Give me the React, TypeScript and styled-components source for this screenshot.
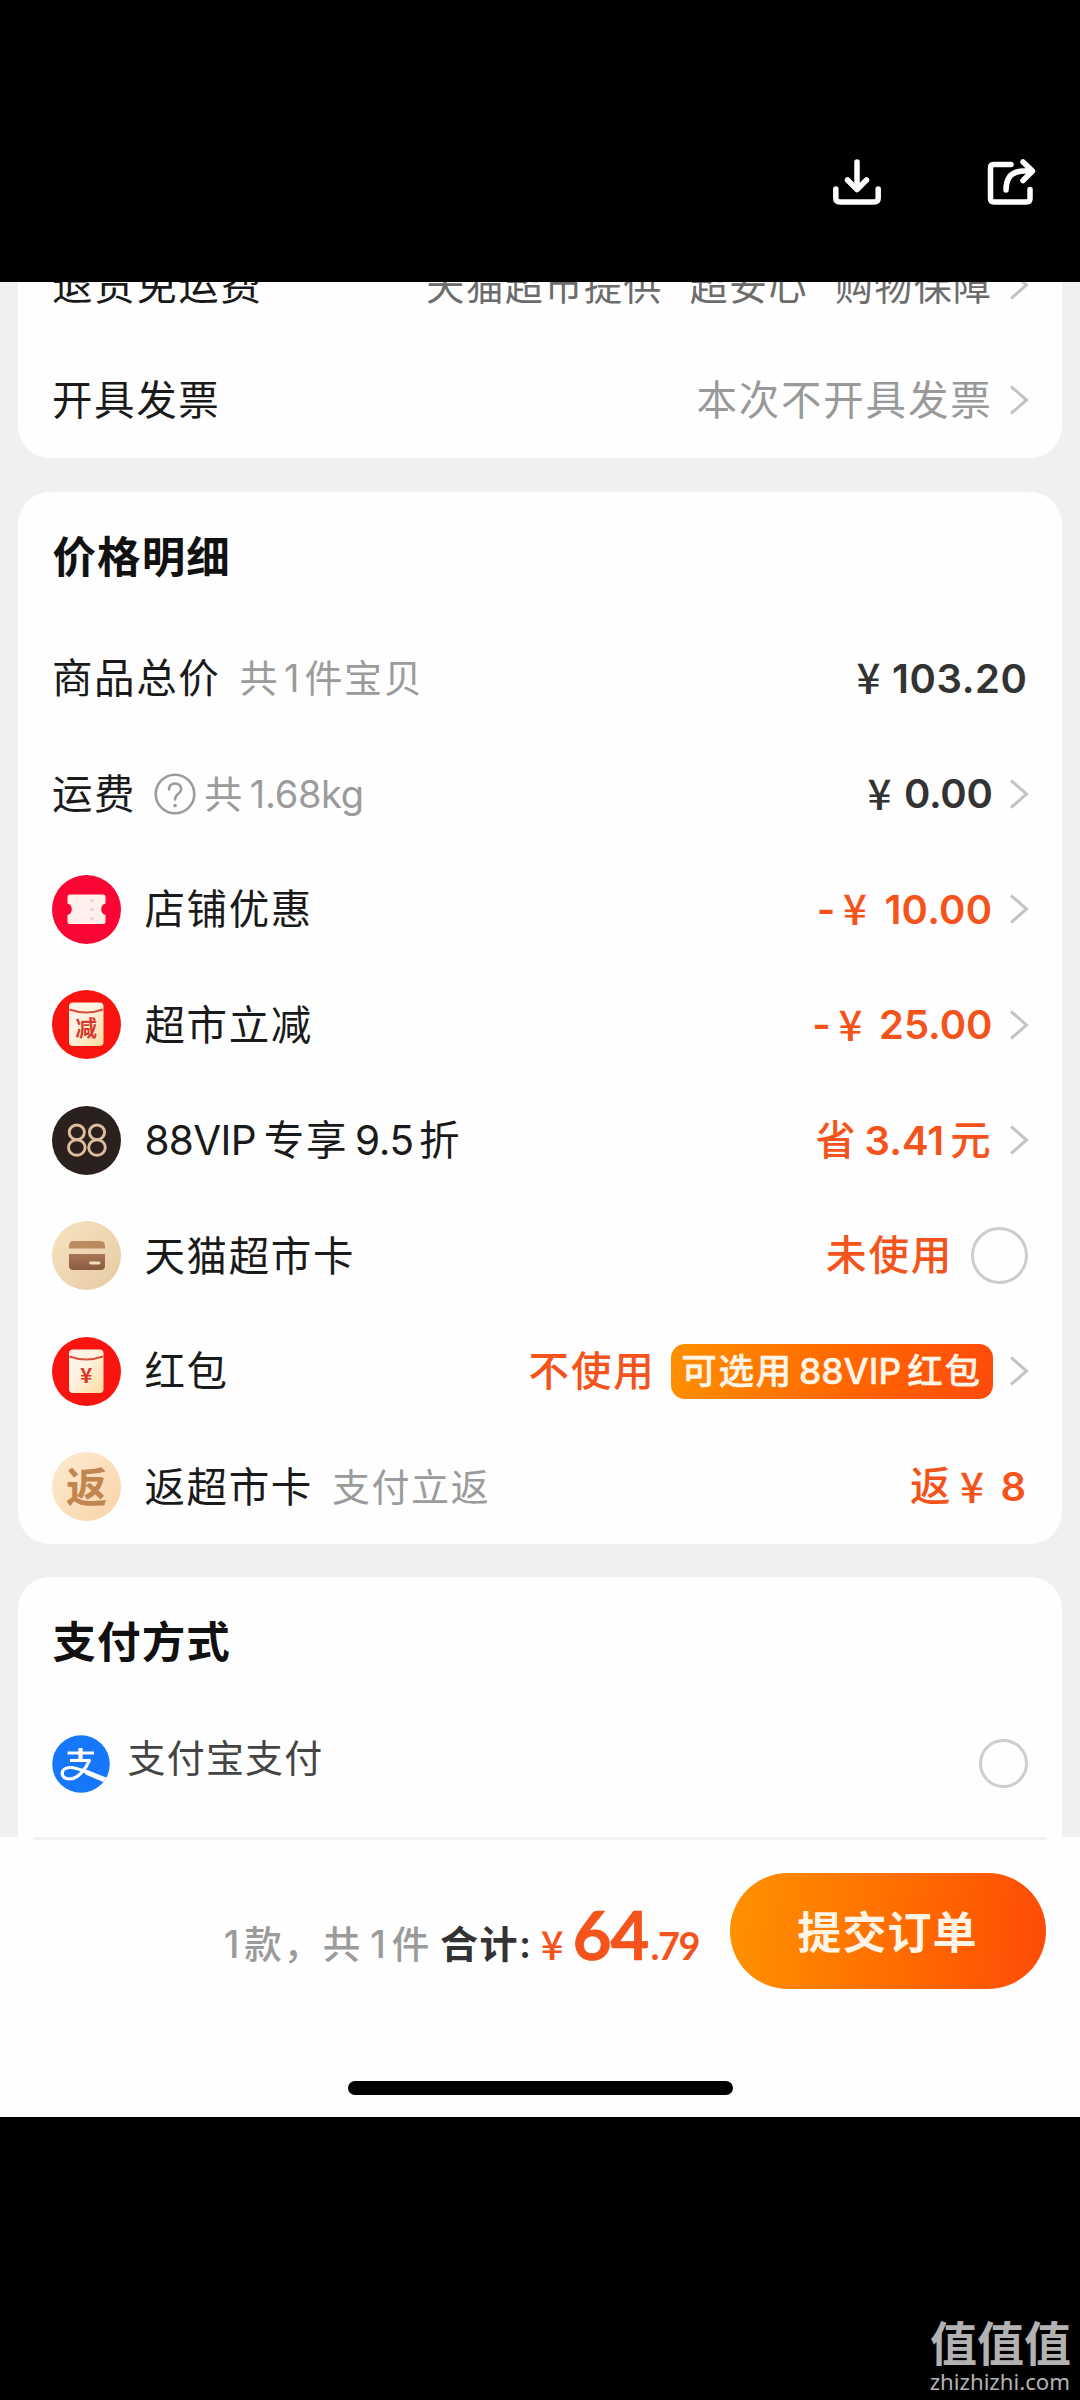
import React from 'react';
import styled, { createGlobalStyle } from 'styled-components';

const cjk = `Inter, "Noto Sans CJK SC", sans-serif`;
const ORANGE = '#f4531c';

const Global = createGlobalStyle`
  * { box-sizing: border-box; }
  body { margin: 0; background: #000; font-family: ${cjk}; line-height: 1; }
`;

const Screen = styled.div`
  width: 1080px;
  height: 2400px;
  display: flex;
  flex-direction: column;
  background: #000;
  overflow: hidden;
`;

const TopBar = styled.header`
  height: 282px;
  flex: none;
  display: flex;
  justify-content: flex-end;
  align-items: flex-start;
  gap: 102px;
  padding: 157px 43px 0 0;
`;

const Content = styled.main`
  height: 1555px;
  flex: none;
  display: flex;
  flex-direction: column;
  gap: 33.5px;
  padding: 0 18px 0 17.5px;
  background: #f0f0f0;
  overflow: hidden;
`;

const Card = styled.section<{ $h: number; $cut?: 'top' | 'bottom' }>`
  height: ${(p) => p.$h}px;
  flex: none;
  display: flex;
  flex-direction: column;
  justify-content: ${(p) => (p.$cut === 'top' ? 'flex-end' : 'flex-start')};
  overflow: hidden;
  background: #fefefe;
  border-radius: ${(p) =>
    p.$cut === 'top' ? '0 0 32px 32px' : p.$cut === 'bottom' ? '32px 32px 0 0' : '32px'};
`;

const Title = styled.h2`
  height: 129px;
  flex: none;
  margin: 0;
  padding: 3px 0 0 35px;
  display: flex;
  align-items: center;
  font-size: 43.5px;
  font-weight: 600;
  letter-spacing: 1.1px;
  color: #111;
`;

const Row = styled.div`
  height: 115.5px;
  flex: none;
  display: flex;
  align-items: center;
  justify-content: space-between;
  padding: 0 34px 0 34.5px;
`;

const Side = styled.div`
  display: flex;
  align-items: center;
  white-space: pre;
`;

const Label = styled.span`
  padding-top: 2px;
  font-size: 40.5px;
  letter-spacing: 1.6px;
  color: #1a1a1a;
`;

const PayLabel = styled.span`
  margin: -11px 0 0 17.5px;
  font-size: 38px;
  letter-spacing: 1.2px;
  color: #444;
`;

const Badge = styled.span`
  width: 69px;
  height: 69px;
  margin: 0 24px 0 -0.5px;
  display: flex;
  svg { display: block; }
`;

const Sub = styled.span<{ $ml: number }>`
  margin-left: ${(p) => p.$ml}px;
  font-size: 38px;
  letter-spacing: 1.6px;
  color: #9b9b9b;
`;

const Value = styled.span<{ $tone?: string; $size?: number; $ls?: number; $ml?: number }>`
  padding-top: 2px;
  margin-left: ${(p) => p.$ml ?? 0}px;
  font-size: ${(p) => p.$size ?? 40.5}px;
  letter-spacing: ${(p) => p.$ls ?? 1.8}px;
  color: ${(p) => p.$tone ?? '#999'};
`;

const Amount = styled.span<{ $tone?: string; $end?: number }>`
  padding-top: 1px;
  display: flex;
  align-items: center;
  margin-right: ${(p) => p.$end ?? 0}px;
  font-size: 40px;
  font-weight: 600;
  color: ${(p) => p.$tone ?? '#333'};
`;

const Strong = styled.span`
  font-size: 40.5px;
  font-weight: 500;
  letter-spacing: 1.8px;
`;

const Yen = styled.span<{ $gap: number; $ml?: number }>`
  width: 23px;
  height: 40px;
  margin: -5px ${(p) => p.$gap}px 0 ${(p) => p.$ml ?? 0}px;
  font-family: "Noto Sans CJK SC", sans-serif;
  font-size: 42px;
  line-height: 40px;
  font-weight: 500;
  display: flex;
  justify-content: center;
`;

const Dash = styled.span`
  margin-right: 8px;
`;

const Digits = styled.span<{ $ls?: number; $m?: string }>`
  font-weight: 600;
  letter-spacing: ${(p) => p.$ls ?? 0}px;
  margin: ${(p) => p.$m ?? '0'};
`;

const Latin = styled.span<{ $m: string; $ls?: number }>`
  margin: ${(p) => p.$m};
  letter-spacing: ${(p) => p.$ls ?? 0}px;
`;

const Arrow = styled.svg`
  width: 20px;
  height: 32px;
  margin: 0 -1px 0 16.5px;
  display: block;
`;

const Radio = styled.span<{ $d: number }>`
  width: ${(p) => p.$d}px;
  height: ${(p) => p.$d}px;
  border: 3px solid #cdcdcd;
  border-radius: 50%;
`;

const Coupon = styled.span`
  width: 322px;
  height: 55px;
  margin: 0 0 0 15px;
  display: flex;
  align-items: center;
  justify-content: center;
  border-radius: 14px;
  background: linear-gradient(100deg, #ff9000, #ff6a00 50%, #ff4a0c);
  color: #fff6ea;
  font-size: 35.5px;
  font-weight: 500;
  letter-spacing: 1.7px;
  -webkit-text-stroke: 0.4px #fff6ea;
`;

const Divider = styled.div`
  width: 1014px;
  height: 3px;
  margin-left: 33px;
  background: #f3f3f3;
`;

const Checkout = styled.footer`
  height: 280px;
  flex: none;
  display: flex;
  flex-direction: column;
  background: #fefefe;
`;

const CheckoutRow = styled.div`
  height: 116px;
  margin-top: 33px;
  display: flex;
  justify-content: flex-end;
  padding-right: 34px;
`;

const Summary = styled.div`
  display: flex;
  align-items: baseline;
  height: 116px;
  padding-top: 28px;
  margin-right: 31px;
  white-space: pre;
`;

const Count = styled.span`
  font-size: 37.5px;
  font-weight: 500;
  letter-spacing: 1.8px;
  color: #9b9b9b;
  transform: translateY(-2px);
`;

const Total = styled.span`
  margin-left: 9px;
  font-size: 38px;
  font-weight: 600;
  letter-spacing: 1.5px;
  color: #333;
  transform: translateY(-2px);
`;

const Price = styled.span<{ $size: number; $ls: number; $ml: number }>`
  margin-left: ${(p) => p.$ml}px;
  font-family: Lato, sans-serif;
  font-weight: 700;
  font-size: ${(p) => p.$size}px;
  letter-spacing: ${(p) => p.$ls}px;
  color: ${ORANGE};
  -webkit-text-stroke: ${(p) => (p.$size > 50 ? 0.7 : 0)}px ${ORANGE};
`;

const PriceYen = styled.span`
  margin-left: 8px;
  width: 24px;
  font-family: "Noto Sans CJK SC", sans-serif;
  font-size: 40px;
  font-weight: 500;
  color: ${ORANGE};
`;

const Submit = styled.button`
  width: 316px;
  height: 116px;
  border: 0;
  padding: 0 1px 2px 0;
  border-radius: 58px;
  background: linear-gradient(95deg, #ff9200, #ff5f00 72%, #ff4a0a);
  color: #fff4e6;
  font: 600 44px ${cjk};
  letter-spacing: 1.1px;
`;

const HomeBar = styled.div`
  width: 385px;
  height: 14px;
  margin: 92px 0 0 348px;
  border-radius: 7px;
  background: #000;
`;

const Watermark = styled.div`
  margin-top: auto;
  align-self: flex-end;
  display: flex;
  flex-direction: column;
  align-items: flex-end;
  padding: 0 10px 7px 0;
  color: #b2b2b2;
`;

const MarkName = styled.span`
  margin: 0 -1px 7px 0;
  font: 700 47px/47px "Noto Sans CJK SC", sans-serif;
`;

const MarkHost = styled.span`
  font: 400 22.2px/22px "Noto Sans", sans-serif;
`;

const HelpMark = styled.svg`
  width: 42px;
  height: 42px;
  margin-left: 18px;
`;

const Chevron = () => (
  <Arrow viewBox="0 0 20 32">
    <path d="M2 2.5 17.5 16 2 29.5" fill="none" stroke="#c4c4c4" strokeWidth="3" />
  </Arrow>
);

const Download = () => (
  <svg width="52" height="50" viewBox="0 0 52 50" fill="none" stroke="#fff" strokeWidth="5.500" strokeLinecap="round" strokeLinejoin="round">
    <path d="M26 5V32M16.500 23 26 32.500 35.500 23M4.800 32V41Q4.800 45 9 45H43Q47.200 45 47.200 41V32" />
  </svg>
);

const Share = () => (
  <svg width="52" height="50" viewBox="0 0 52 50" fill="none" stroke="#fff" strokeWidth="5.500" strokeLinecap="round" strokeLinejoin="round">
    <path d="M26 7.500H8.500Q5.500 7.500 5.500 11V41.500Q5.500 45 9 45H41.500Q45 45 45 41.500V32.500M38 5 47.500 14 38 23.500M46.500 14H39Q21 14 21 33" />
  </svg>
);

const Help = () => (
  <HelpMark viewBox="0 0 42 42" fill="none" stroke="#9b9b9b" strokeWidth="2.600" strokeLinecap="round">
    <circle cx="21" cy="21" r="19.300" />
    <path d="M15 16.500C15 12.800 17.500 10.500 21 10.500S27.200 12.800 27.200 16.200C27.200 20.500 21 20.500 21 26.500" />
    <circle cx="21" cy="32.500" r="1.100" fill="#9b9b9b" strokeWidth="1.500" />
  </HelpMark>
);

const TicketIcon = () => (
  <svg width="69" height="69" viewBox="0 0 69 69">
    <circle cx="34.500" cy="34.500" r="34.500" fill="#fb0535" />
    <path d="M18 19.500H51Q53.500 19.500 53.500 22V28.500A6 6 0 0 0 53.500 40V46.500Q53.500 49 51 49H18Q15.500 49 15.500 46.500V40A6 6 0 0 0 15.500 28.500V22Q15.500 19.500 18 19.500Z" fill="#fff0ec" />
    <path d="M40 24V45" stroke="#f9c9cb" strokeWidth="3" strokeDasharray="3 6" />
  </svg>
);

const EnvelopeIcon = ({ mark, size }: { mark: string; size: number }) => (
  <svg width="69" height="69" viewBox="0 0 69 69">
    <defs>
      <linearGradient id="paper" x1="0" y1="0" x2="1" y2="1">
        <stop offset="0.400" stopColor="#fff3e4" />
        <stop offset="1" stopColor="#fbdc9c" />
      </linearGradient>
    </defs>
    <circle cx="34.500" cy="34.500" r="34.500" fill="#f9140f" />
    <rect x="17" y="12.500" width="34.500" height="43.500" rx="4" fill="url(#paper)" />
    <path d="M17.500 19.500Q34 25.500 51 19.500" fill="none" stroke="#d8503c" strokeWidth="2" />
    <text x="34.300" y="45.500" textAnchor="middle" fontSize={size} fontWeight="700" fontFamily='"Noto Sans CJK SC", sans-serif' fill="#d8372a">
      {mark}
    </text>
  </svg>
);

const VipIcon = () => (
  <svg width="69" height="69" viewBox="0 0 69 69">
    <circle cx="34.500" cy="34.500" r="34.500" fill="#2a201d" />
    <g fill="none" stroke="#dcbd9c" strokeWidth="2.900">
      <ellipse cx="24.800" cy="26.300" rx="7.600" ry="7.300" />
      <ellipse cx="24.800" cy="41.500" rx="8.300" ry="7.800" />
      <ellipse cx="45" cy="26.300" rx="7.600" ry="7.300" />
      <ellipse cx="45" cy="41.500" rx="8.300" ry="7.800" />
    </g>
  </svg>
);

const CardIcon = () => (
  <svg width="69" height="69" viewBox="0 0 69 69">
    <defs>
      <linearGradient id="sand" x1="0" y1="0" x2="1" y2="1">
        <stop offset="0" stopColor="#f8e2c0" />
        <stop offset="1" stopColor="#e6cba2" />
      </linearGradient>
      <linearGradient id="leather" x1="0" y1="0" x2="0" y2="1">
        <stop offset="0" stopColor="#a87852" />
        <stop offset="1" stopColor="#8a5a42" />
      </linearGradient>
    </defs>
    <circle cx="34.500" cy="34.500" r="34.500" fill="url(#sand)" />
    <path d="M17 27.500V25Q17 20 22 20H48Q53 20 53 25V27.500Z" fill="#b98c60" />
    <path d="M17 33H53V44.500Q53 49 48.500 49H21.500Q17 49 17 44.500Z" fill="url(#leather)" />
    <path d="M38.500 42H47" stroke="#f2dcc0" strokeWidth="2.800" strokeLinecap="round" />
  </svg>
);

const ReturnIcon = () => (
  <svg width="69" height="69" viewBox="0 0 69 69">
    <defs>
      <linearGradient id="cream" x1="0" y1="0" x2="1" y2="1">
        <stop offset="0" stopColor="#fdebd2" />
        <stop offset="1" stopColor="#f8d3a6" />
      </linearGradient>
    </defs>
    <circle cx="34.500" cy="34.500" r="34.500" fill="url(#cream)" />
    <text x="34.500" y="49.500" textAnchor="middle" fontSize="41" fontWeight="700" fontFamily='"Noto Sans CJK SC", sans-serif' fill="#c1854f">
      返
    </text>
  </svg>
);

const AlipayIcon = () => (
  <svg width="58" height="58" viewBox="0 0 58 58">
    <defs>
      <clipPath id="disc"><circle cx="29" cy="29" r="28.800" /></clipPath>
    </defs>
    <circle cx="29" cy="29" r="28.800" fill="#1677fb" />
    <g clipPath="url(#disc)" fill="none" stroke="#fff">
      <path d="M28.500 13V25" strokeWidth="4.200" />
      <path d="M15.500 18H42M18 25.500H38.500" strokeWidth="2.800" />
      <path d="M37.500 25C34 34 26 44 17.500 44 7.500 44 8 33 17.500 32.500 26 32 38 39.500 60 46" strokeWidth="3.200" />
      <path d="M34 37 60 48" strokeWidth="5" />
    </g>
  </svg>
);

export default function App() {
  return (
    <Screen>
      <Global />
      <TopBar>
        <Download />
        <Share />
      </TopBar>

      <Content>
        <Card $h={176} $cut="top">
          <Row>
            <Side><Label>退货免运费</Label></Side>
            <Side>
              <Value $tone="#6c6c6c" $size={38} $ls={1.4}>天猫超市提供</Value>
              <Value $tone="#6c6c6c" $size={38} $ls={1.4} $ml={27}>超安心</Value>
              <Value $tone="#6c6c6c" $size={38} $ls={1.4} $ml={27}>购物保障</Value>
              <Chevron />
            </Side>
          </Row>
          <Row>
            <Side><Label>开具发票</Label></Side>
            <Side><Value>本次不开具发票</Value><Chevron /></Side>
          </Row>
        </Card>

        <Card $h={1052}>
          <Title>价格明细</Title>
          <Row>
            <Side>
              <Label>商品总价</Label>
              <Sub $ml={19}>共<Latin $m="0 5px">1</Latin>件宝贝</Sub>
            </Side>
            <Amount $end={0.5}><Yen $gap={12}>¥</Yen><Digits $ls={0.6}>103.20</Digits></Amount>
          </Row>
          <Row>
            <Side>
              <Label>运费</Label>
              <Help />
              <Sub $ml={8}>共<Latin $m="0 0 0 6px" $ls={-0.3}>1.68kg</Latin></Sub>
            </Side>
            <Side><Amount><Yen $gap={13}>¥</Yen><Digits $ls={-0.3}>0.00</Digits></Amount><Chevron /></Side>
          </Row>
          <Row>
            <Side><Badge><TicketIcon /></Badge><Label>店铺优惠</Label></Side>
            <Side>
              <Amount $tone={ORANGE}><Dash>-</Dash><Yen $gap={18}>¥</Yen><Digits $ls={0.3}>10.00</Digits></Amount>
              <Chevron />
            </Side>
          </Row>
          <Row>
            <Side><Badge><EnvelopeIcon mark="减" size={21.5} /></Badge><Label>超市立减</Label></Side>
            <Side>
              <Amount $tone={ORANGE}><Dash>-</Dash><Yen $gap={17}>¥</Yen><Digits>25.00</Digits></Amount>
              <Chevron />
            </Side>
          </Row>
          <Row>
            <Side>
              <Badge><VipIcon /></Badge>
              <Label><Latin $m="0 8px 0 0" $ls={-0.7}>88VIP</Latin>专享<Latin $m="0 5px 0 7px" $ls={-0.3}>9.5</Latin>折</Label>
            </Side>
            <Side>
              <Amount $tone={ORANGE}><Strong>省</Strong><Digits $m="0 6px 0 7px">3.41</Digits><Strong>元</Strong></Amount>
              <Chevron />
            </Side>
          </Row>
          <Row>
            <Side><Badge><CardIcon /></Badge><Label>天猫超市卡</Label></Side>
            <Side>
              <Amount $tone={ORANGE} $end={18}><Strong>未使用</Strong></Amount>
              <Radio $d={57} />
            </Side>
          </Row>
          <Row>
            <Side><Badge><EnvelopeIcon mark="¥" size={21} /></Badge><Label>红包</Label></Side>
            <Side>
              <Amount $tone={ORANGE}><Strong>不使用</Strong></Amount>
              <Coupon>可选用<Latin $m="0 6px">88VIP</Latin>红包</Coupon>
              <Chevron />
            </Side>
          </Row>
          <Row>
            <Side>
              <Badge><ReturnIcon /></Badge>
              <Label>返超市卡</Label>
              <Sub $ml={19}>支付立返</Sub>
            </Side>
            <Amount $tone={ORANGE} $end={2}><Strong>返</Strong><Yen $gap={17} $ml={8}>¥</Yen><Digits>8</Digits></Amount>
          </Row>
        </Card>

        <Card $h={270} $cut="bottom">
          <Title>支付方式</Title>
          <Row>
            <Side><AlipayIcon /><PayLabel>支付宝支付</PayLabel></Side>
            <Radio $d={49} />
          </Row>
        </Card>
      </Content>

      <Checkout>
        <Divider />
        <CheckoutRow>
          <Summary>
            <Count>1<Latin $m="0 0 0 3px" $ls={1.8}>款，共</Latin><Latin $m="0 6px 0 8px">1</Latin>件</Count>
            <Total>合计:</Total>
            <PriceYen>¥</PriceYen>
            <Price $size={67} $ls={-1} $ml={8}>64</Price>
            <Price $size={38} $ls={-1.5} $ml={2}>.79</Price>
          </Summary>
          <Submit>提交订单</Submit>
        </CheckoutRow>
        <HomeBar />
      </Checkout>

      <Watermark>
        <MarkName>值值值</MarkName>
        <MarkHost>zhizhizhi.com</MarkHost>
      </Watermark>
    </Screen>
  );
}
